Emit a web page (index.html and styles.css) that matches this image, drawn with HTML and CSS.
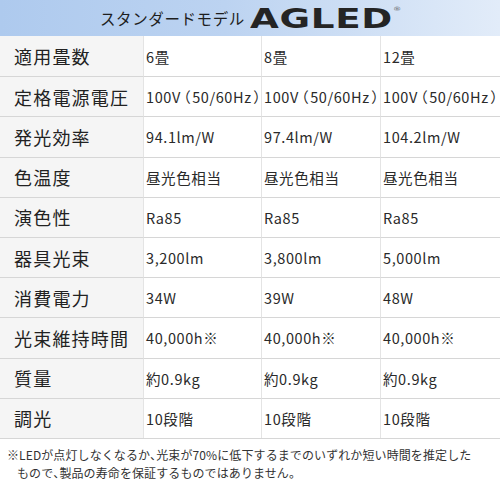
FILE: index.html
```html
<!DOCTYPE html>
<html lang="ja">
<head>
<meta charset="utf-8">
<link rel="stylesheet" href="styles.css">
</head>
<body>
<div class="page">
  <div class="header">
    <span class="title">スタンダードモデル</span>
    <span class="logo">AGLED<sup class="reg">®</sup></span>
  </div>
  <div class="spec">
    <div class="label">適用畳数</div><div class="val">6畳</div><div class="val">8畳</div><div class="val">12畳</div>
    <div class="label">定格電源電圧</div><div class="val">100V<span class="p">（</span>50/60Hz<span class="p">）</span></div><div class="val">100V<span class="p">（</span>50/60Hz<span class="p">）</span></div><div class="val">100V<span class="p">（</span>50/60Hz<span class="p">）</span></div>
    <div class="label">発光効率</div><div class="val">94.1lm/W</div><div class="val">97.4lm/W</div><div class="val">104.2lm/W</div>
    <div class="label">色温度</div><div class="val">昼光色相当</div><div class="val">昼光色相当</div><div class="val">昼光色相当</div>
    <div class="label">演色性</div><div class="val">Ra85</div><div class="val">Ra85</div><div class="val">Ra85</div>
    <div class="label">器具光束</div><div class="val">3,200lm</div><div class="val">3,800lm</div><div class="val">5,000lm</div>
    <div class="label">消費電力</div><div class="val">34W</div><div class="val">39W</div><div class="val">48W</div>
    <div class="label">光束維持時間</div><div class="val">40,000h※</div><div class="val">40,000h※</div><div class="val">40,000h※</div>
    <div class="label">質量</div><div class="val">約0.9kg</div><div class="val">約0.9kg</div><div class="val">約0.9kg</div>
    <div class="label">調光</div><div class="val">10段階</div><div class="val">10段階</div><div class="val">10段階</div>
  </div>
  <p class="note">※LEDが点灯しなくなるか<span class="c">、</span>光束が70%に低下するまでのいずれか短い時間を推定した<br>もので<span class="c">、</span>製品の寿命を保証するものではありません。</p>
</div>
</body>
</html>
```
FILE: styles.css
```css
html, body {
  margin: 0;
  padding: 0;
  background: #ffffff;
}
.page {
  width: 500px;
  font-family: "Noto Sans CJK JP", "Noto Sans", sans-serif;
  color: #333333;
}
.header {
  height: 36px;
  display: flex;
  align-items: center;
  justify-content: center;
  gap: 5px;
  background: linear-gradient(90deg, #aecaee 0%, #bcd3f1 45%, #e2ecf9 100%);
}
.title {
  font-size: 15.5px;
  letter-spacing: 0.6px;
  color: #1e1e1e;
}
.logo {
  display: inline-block;
  font-family: "DejaVu Sans", sans-serif;
  font-weight: bold;
  font-size: 27px;
  line-height: 1;
  color: #242424;
  letter-spacing: 0.5px;
  transform: scaleX(1.38);
  transform-origin: left center;
  margin-right: 40px;
  margin-top: 1px;
}
.reg {
  font-size: 6px;
  vertical-align: top;
  font-weight: normal;
  color: #666;
  position: relative;
  top: 1px;
}
.spec {
  display: grid;
  grid-template-columns: 143px 118px 119px 1fr;
  grid-auto-rows: 40.2px;
  border-bottom: 1px solid #d6d6d6;
}
.label, .val {
  display: flex;
  align-items: center;
  border-top: 1px solid #d6d6d6;
  box-sizing: border-box;
}
.spec > div:nth-child(-n+4) {
  border-top: none;
}
.label {
  background: #f5f5f5;
  padding-left: 14px;
  font-size: 18px;
  letter-spacing: 1.2px;
  color: #222222;
}
.val {
  border-left: 1px solid #e4e4e4;
  padding-left: 2px;
  font-size: 14.5px;
  letter-spacing: 0.6px;
  white-space: nowrap;
  color: #2a2a2a;
}
.p {
  font-feature-settings: "palt";
  letter-spacing: 0;
  padding: 0 2px;
}
.note {
  margin: 7px 0 0 0;
  padding: 0 4px 0 17px;
  text-indent: -10px;
  font-size: 12px;
  line-height: 18px;
  color: #333333;
  white-space: nowrap;
  letter-spacing: 0.1px;
}
.c {
  font-feature-settings: "palt";
}
```
